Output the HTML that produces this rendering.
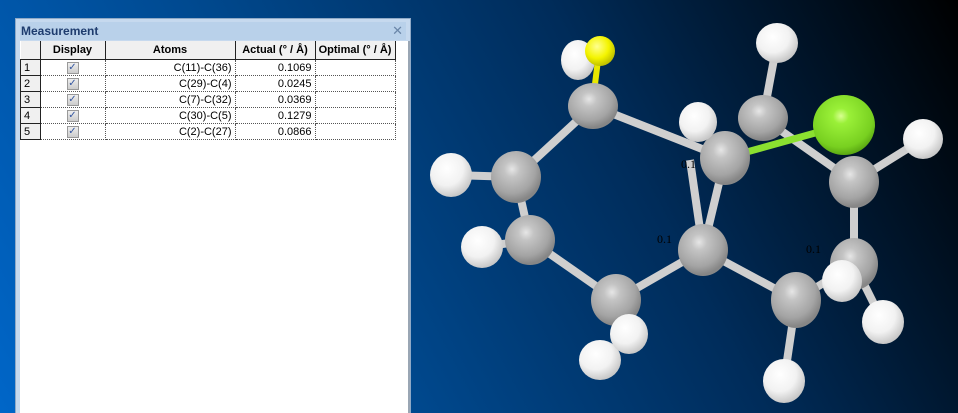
<!DOCTYPE html>
<html style="margin:0;width:958px;height:413px;overflow:hidden"><head><style>
body{margin:0;width:958px;height:413px;overflow:hidden;position:relative;font-family:"Liberation Sans",sans-serif;
background:linear-gradient(62deg,#0066c8 0%,#00498f 35%,#002c5a 65%,#000 100%);}
#panel{position:absolute;left:15px;top:18px;width:396px;height:395px;background:#c6d9ee;border:1px solid #8fa9c6;border-bottom:none;box-sizing:border-box;overflow:hidden}
#title{position:absolute;left:4px;top:3px;right:4px;height:18px;background:#b9d1ea;font-size:12px;font-weight:bold;color:#1e3c6e;line-height:18px;padding-left:1px}
#x{position:absolute;right:3px;top:0;color:#6a86a8;font-size:13px;font-weight:normal}
#body{position:absolute;left:4px;top:22px;width:388px;height:380px;background:#fff;border-right:2px solid #9aa6b4}
table{border-collapse:collapse;font-size:11px;position:absolute;left:0;top:0}
th{background:#f0f0f0;height:18px;border:1px solid #222;border-top:none;font-weight:bold;padding:0;text-align:center}
td{height:15px;border:1px dotted #555;padding:0 3px;text-align:right}
td.n{background:#f0f0f0;border:1px solid #222;text-align:left;border-top:1px dotted #888}
.cb{display:inline-block;width:10px;height:10px;border:1px solid #999;background:linear-gradient(#eee,#ccc);color:#3456a0;font-size:10px;line-height:10px;text-align:center;vertical-align:middle}
td.c{text-align:center}
</style></head><body>
<svg width="958" height="413" style="position:absolute;left:0;top:0">
<defs>
<radialGradient id="g" cx="42%" cy="35%" r="62%"><stop offset="0" stop-color="#e6e6e6"/><stop offset=".25" stop-color="#c4c4c4"/><stop offset=".75" stop-color="#a4a4a4"/><stop offset="1" stop-color="#868686"/></radialGradient>
<radialGradient id="w" cx="40%" cy="35%" r="65%"><stop offset="0" stop-color="#fff"/><stop offset=".6" stop-color="#f2f2f2"/><stop offset="1" stop-color="#c8c8c8"/></radialGradient>
<radialGradient id="gr" cx="45%" cy="35%" r="65%"><stop offset="0" stop-color="#d8ff90"/><stop offset=".2" stop-color="#9af038"/><stop offset=".8" stop-color="#78d020"/><stop offset="1" stop-color="#5aa812"/></radialGradient>
<radialGradient id="y" cx="40%" cy="35%" r="65%"><stop offset="0" stop-color="#ffff90"/><stop offset=".6" stop-color="#f4f400"/><stop offset="1" stop-color="#c0c000"/></radialGradient>
</defs>
<g stroke="#cfcfcf" stroke-width="8">
<line x1="593" y1="106" x2="516" y2="177"/><line x1="516" y1="177" x2="530" y2="240"/>
<line x1="530" y1="240" x2="616" y2="300"/><line x1="616" y1="300" x2="703" y2="250"/>
<line x1="703" y1="250" x2="796" y2="300"/><line x1="796" y1="300" x2="854" y2="264"/>
<line x1="854" y1="264" x2="854" y2="182"/><line x1="854" y1="182" x2="763" y2="118"/>
<line x1="593" y1="106" x2="725" y2="158"/><line x1="703" y1="250" x2="725" y2="158"/>
<line x1="703" y1="250" x2="690" y2="160"/>
<line x1="763" y1="118" x2="777" y2="43"/><line x1="516" y1="177" x2="451" y2="175"/>
<line x1="530" y1="240" x2="482" y2="247"/><line x1="616" y1="300" x2="629" y2="334"/>
<line x1="796" y1="300" x2="784" y2="381"/><line x1="854" y1="264" x2="883" y2="322"/>
<line x1="854" y1="182" x2="923" y2="139"/>
</g>
<line x1="725" y1="158" x2="844" y2="125" stroke="#8be030" stroke-width="7"/>
<line x1="595" y1="84" x2="598" y2="60" stroke="#e8e800" stroke-width="6"/>
<ellipse cx="578" cy="60" rx="17" ry="20" fill="url(#w)"/>
<ellipse cx="777" cy="43" rx="21" ry="20" fill="url(#w)"/>
<ellipse cx="763" cy="118" rx="25" ry="23" fill="url(#g)"/>
<ellipse cx="593" cy="106" rx="25" ry="23" fill="url(#g)"/>
<ellipse cx="600" cy="51" rx="15" ry="15" fill="url(#y)"/>
<ellipse cx="451" cy="175" rx="21" ry="22" fill="url(#w)"/>
<ellipse cx="516" cy="177" rx="25" ry="26" fill="url(#g)"/>
<ellipse cx="482" cy="247" rx="21" ry="21" fill="url(#w)"/>
<ellipse cx="530" cy="240" rx="25" ry="25" fill="url(#g)"/>
<ellipse cx="600" cy="360" rx="21" ry="20" fill="url(#w)"/>
<ellipse cx="616" cy="300" rx="25" ry="26" fill="url(#g)"/>
<ellipse cx="629" cy="334" rx="19" ry="20" fill="url(#w)"/>
<ellipse cx="703" cy="250" rx="25" ry="26" fill="url(#g)"/>
<ellipse cx="725" cy="158" rx="25" ry="27" fill="url(#g)"/>
<ellipse cx="698" cy="122" rx="19" ry="20" fill="url(#w)"/>
<ellipse cx="854" cy="182" rx="25" ry="26" fill="url(#g)"/>
<ellipse cx="844" cy="125" rx="31" ry="30" fill="url(#gr)"/>
<ellipse cx="923" cy="139" rx="20" ry="20" fill="url(#w)"/>
<ellipse cx="854" cy="264" rx="24" ry="26" fill="url(#g)"/>
<ellipse cx="883" cy="322" rx="21" ry="22" fill="url(#w)"/>
<ellipse cx="796" cy="300" rx="25" ry="28" fill="url(#g)"/>
<ellipse cx="842" cy="281" rx="20" ry="21" fill="url(#w)"/>
<ellipse cx="784" cy="381" rx="21" ry="22" fill="url(#w)"/>
<g font-family="Liberation Serif,serif" font-size="12" fill="#000">
<text x="681" y="168">0.1</text><text x="657" y="243">0.1</text><text x="806" y="253">0.1</text>
</g>
</svg>
<div id="panel">
<div id="title">Measurement<span id="x">✕</span></div>
<div id="body">
<table>
<tr><th style="width:19px;border-left:none"></th><th style="width:64px">Display</th><th style="width:129px">Atoms</th><th style="width:79px">Actual (° / Å)</th><th style="width:79px">Optimal (° / Å)</th></tr>
<tr><td class="n">1</td><td class="c"><span class="cb">✓</span></td><td>C(11)-C(36)</td><td>0.1069</td><td></td></tr>
<tr><td class="n">2</td><td class="c"><span class="cb">✓</span></td><td>C(29)-C(4)</td><td>0.0245</td><td></td></tr>
<tr><td class="n">3</td><td class="c"><span class="cb">✓</span></td><td>C(7)-C(32)</td><td>0.0369</td><td></td></tr>
<tr><td class="n">4</td><td class="c"><span class="cb">✓</span></td><td>C(30)-C(5)</td><td>0.1279</td><td></td></tr>
<tr><td class="n">5</td><td class="c"><span class="cb">✓</span></td><td>C(2)-C(27)</td><td>0.0866</td><td></td></tr>
</table>
</div>
</div>
</body></html>
